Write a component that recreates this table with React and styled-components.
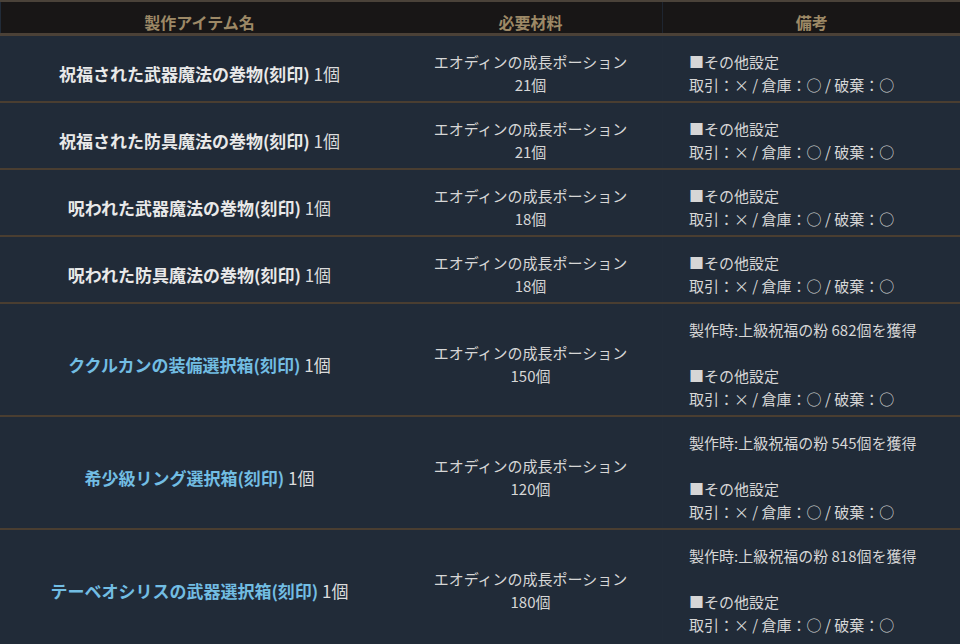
import React from "react";
import styled, { createGlobalStyle } from "styled-components";

const Global = createGlobalStyle`
  html, body { margin: 0; padding: 0; background: #212b38; }
  body { font-family: "Noto Sans CJK JP", "Noto Sans", sans-serif; }
`;

const Table = styled.table`
  width: 960px;
  border-collapse: collapse;
  table-layout: fixed;
  font-size: 15px;
  line-height: 23px;
  border-bottom: 2px solid #5a5a5a;
`;

const HeadRow = styled.tr`
  background: #181616;
  border-top: 2px solid #4a4239;
  border-bottom: 3px solid #4b4137;
`;

const Th = styled.th`
  height: 31px;
  box-sizing: border-box;
  padding: 9px 0 0;
  font-size: 16px;
  line-height: 22px;
  color: #9d8966;
  font-weight: bold;
  text-align: center;
  vertical-align: top;
  border-left: 1px solid ${(p) => (p.$divided ? "#1e2530" : "transparent")};
`;

const Row = styled.tr`
  background: #212b38;
  border-bottom: 2px solid ${(p) => (p.$last ? "transparent" : "#4a3e31")};
`;

const Td = styled.td`
  padding: ${(p) => (p.$left ? "14px 8px 5px 26px" : "14px 0 5px")};
  vertical-align: middle;
  text-align: ${(p) => (p.$left ? "left" : "center")};
  color: #d6d6d6;
  border-left: 1px solid ${(p) => (p.$divided ? "#222c39" : "transparent")};
`;

const NameCell = styled(Td)`
  font-size: 17px;
`;

const Name = styled.span`
  font-weight: bold;
  color: ${(p) => (p.$blue ? "#72bde3" : "#e9e9e9")};
`;

const Count = styled.span`
  color: #dcdcdc;
`;

const Line = styled.div`
  min-height: 23px;
`;

const rows = [
  { name: "祝福された武器魔法の巻物(刻印)", qty: 21 },
  { name: "祝福された防具魔法の巻物(刻印)", qty: 21 },
  { name: "呪われた武器魔法の巻物(刻印)", qty: 18 },
  { name: "呪われた防具魔法の巻物(刻印)", qty: 18 },
  { name: "ククルカンの装備選択箱(刻印)", qty: 150, blue: true, bonus: 682 },
  { name: "希少級リング選択箱(刻印)", qty: 120, blue: true, bonus: 545 },
  { name: "テーベオシリスの武器選択箱(刻印)", qty: 180, blue: true, bonus: 818 },
];

export default function App() {
  return (
    <>
      <Global />
      <Table>
        <colgroup>
          <col style={{ width: 398 }} />
          <col style={{ width: 264 }} />
          <col style={{ width: 298 }} />
        </colgroup>
        <thead>
          <HeadRow>
            <Th>製作アイテム名</Th>
            <Th>必要材料</Th>
            <Th $divided>備考</Th>
          </HeadRow>
        </thead>
        <tbody>
          {rows.map((r, i) => (
            <Row key={i} $last={i === rows.length - 1}>
              <NameCell>
                <Name $blue={r.blue}>{r.name}</Name> <Count>1個</Count>
              </NameCell>
              <Td>
                <Line>エオディンの成長ポーション</Line>
                <Line>{r.qty}個</Line>
              </Td>
              <Td $left $divided>
                {r.bonus && (
                  <>
                    <Line>製作時:上級祝福の粉 {r.bonus}個を獲得</Line>
                    <Line />
                  </>
                )}
                <Line>■その他設定</Line>
                <Line>取引：× / 倉庫：○ / 破棄：○</Line>
              </Td>
            </Row>
          ))}
        </tbody>
      </Table>
    </>
  );
}
